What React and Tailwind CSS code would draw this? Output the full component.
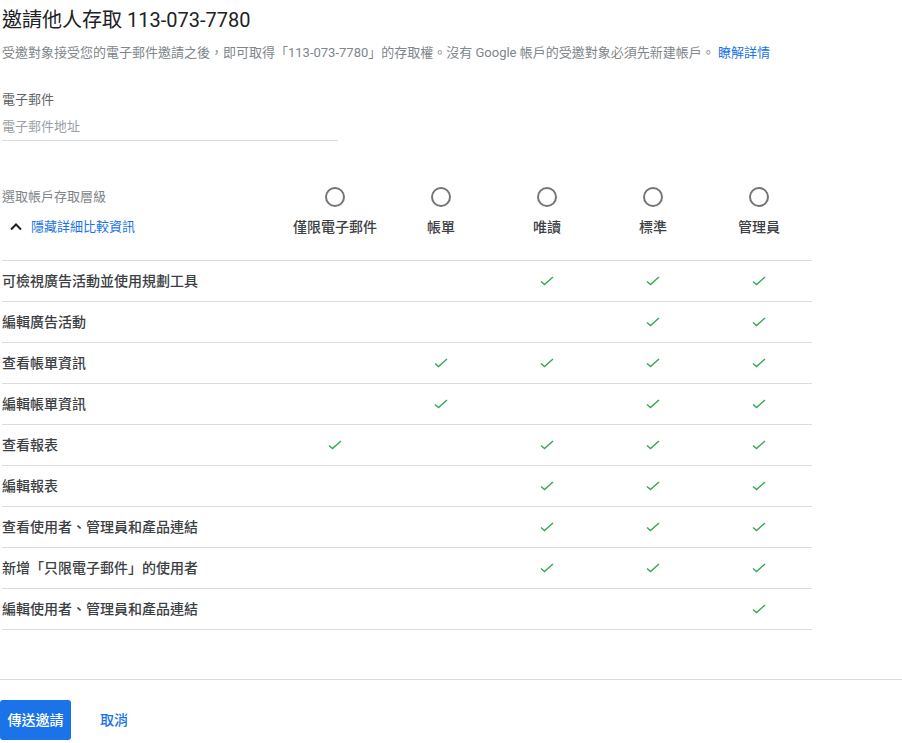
import React from 'react';

const levels = ['僅限電子郵件', '帳單', '唯讀', '標準', '管理員'];

const rows = [
  ['可檢視廣告活動並使用規劃工具', [0, 0, 1, 1, 1]],
  ['編輯廣告活動', [0, 0, 0, 1, 1]],
  ['查看帳單資訊', [0, 1, 1, 1, 1]],
  ['編輯帳單資訊', [0, 1, 0, 1, 1]],
  ['查看報表', [1, 0, 1, 1, 1]],
  ['編輯報表', [0, 0, 1, 1, 1]],
  ['查看使用者、管理員和產品連結', [0, 0, 1, 1, 1]],
  ['新增「只限電子郵件」的使用者', [0, 0, 1, 1, 1]],
  ['編輯使用者、管理員和產品連結', [0, 0, 0, 0, 1]],
];

function Check() {
  return (
    <svg width="14" height="14" viewBox="0 0 14 14" fill="none">
      <path d="M1 7.5 L4.5 10.5 L13 3" stroke="#34a853" strokeWidth="1.4" />
    </svg>
  );
}

export default function App() {
  return (
    <div className="w-[902px] h-[743px] bg-white overflow-hidden font-['Roboto','Noto_Sans_CJK_TC',sans-serif]">
      <div className="px-[2px]">
        <div className="pt-[8px] text-[20px] leading-[24px] text-[#202124]">邀請他人存取 113-073-7780</div>
        <div className="mt-[11px] text-[13px] leading-[20px] text-[#80868b] whitespace-nowrap">
          受邀對象接受您的電子郵件邀請之後，即可取得「113-073-7780」的存取權。沒有 Google 帳戶的受邀對象必須先新建帳戶。 <span className="text-[#1a73e8]">瞭解詳情</span>
        </div>

        <div className="mt-[27px] text-[13px] leading-[20px] text-[#5f6368]">電子郵件</div>
        <div className="mt-[7px] w-[336px] pb-[3px] border-b border-[#dadce0] text-[13px] leading-[20px] text-[#9aa0a6]">電子郵件地址</div>

        <div className="mt-[44px] w-[810px]">
          <div className="grid grid-cols-[280px_repeat(5,106px)] border-b border-[#dadce0] pb-[23px]">
            <div className="h-[24px] flex items-center text-[13px] text-[#80868b]">選取帳戶存取層級</div>
            {levels.map((l) => (
              <div key={l} className="h-[24px] flex items-center justify-center">
                <div className="w-[20px] h-[20px] rounded-full border-2 border-[#757575]" />
              </div>
            ))}
            <div className="mt-[8px] h-[20px] flex items-center gap-[8px] text-[13px] text-[#1a73e8]">
              <svg width="20" height="20" viewBox="0 0 20 20" className="ml-[4px]">
                <path d="M5 12.5 L10 7.5 L15 12.5" stroke="#202124" strokeWidth="2" fill="none" />
              </svg>
              <span className="-ml-[3px]">隱藏詳細比較資訊</span>
            </div>
            {levels.map((l) => (
              <div key={l} className="mt-[8px] h-[20px] flex items-center justify-center text-[14px] font-medium text-[#3c4043]">{l}</div>
            ))}
          </div>
          {rows.map(([label, vals]) => (
            <div key={label} className="grid grid-cols-[280px_repeat(5,106px)] h-[41px] border-b border-[#dadce0]">
              <div className="flex items-center text-[14px] font-medium text-[#3c4043]">{label}</div>
              {vals.map((v, i) => (
                <div key={i} className="flex items-center justify-center">{v ? <Check /> : null}</div>
              ))}
            </div>
          ))}
        </div>
      </div>

      <div className="mt-[49px] border-t border-[#dadce0] pt-[20px] flex items-center">
        <button className="h-[40px] w-[71px] rounded-[3px] bg-[#1a73e8] text-white text-[14px] font-medium">傳送邀請</button>
        <button className="ml-[29px] text-[14px] font-medium text-[#1a73e8]">取消</button>
      </div>
    </div>
  );
}
